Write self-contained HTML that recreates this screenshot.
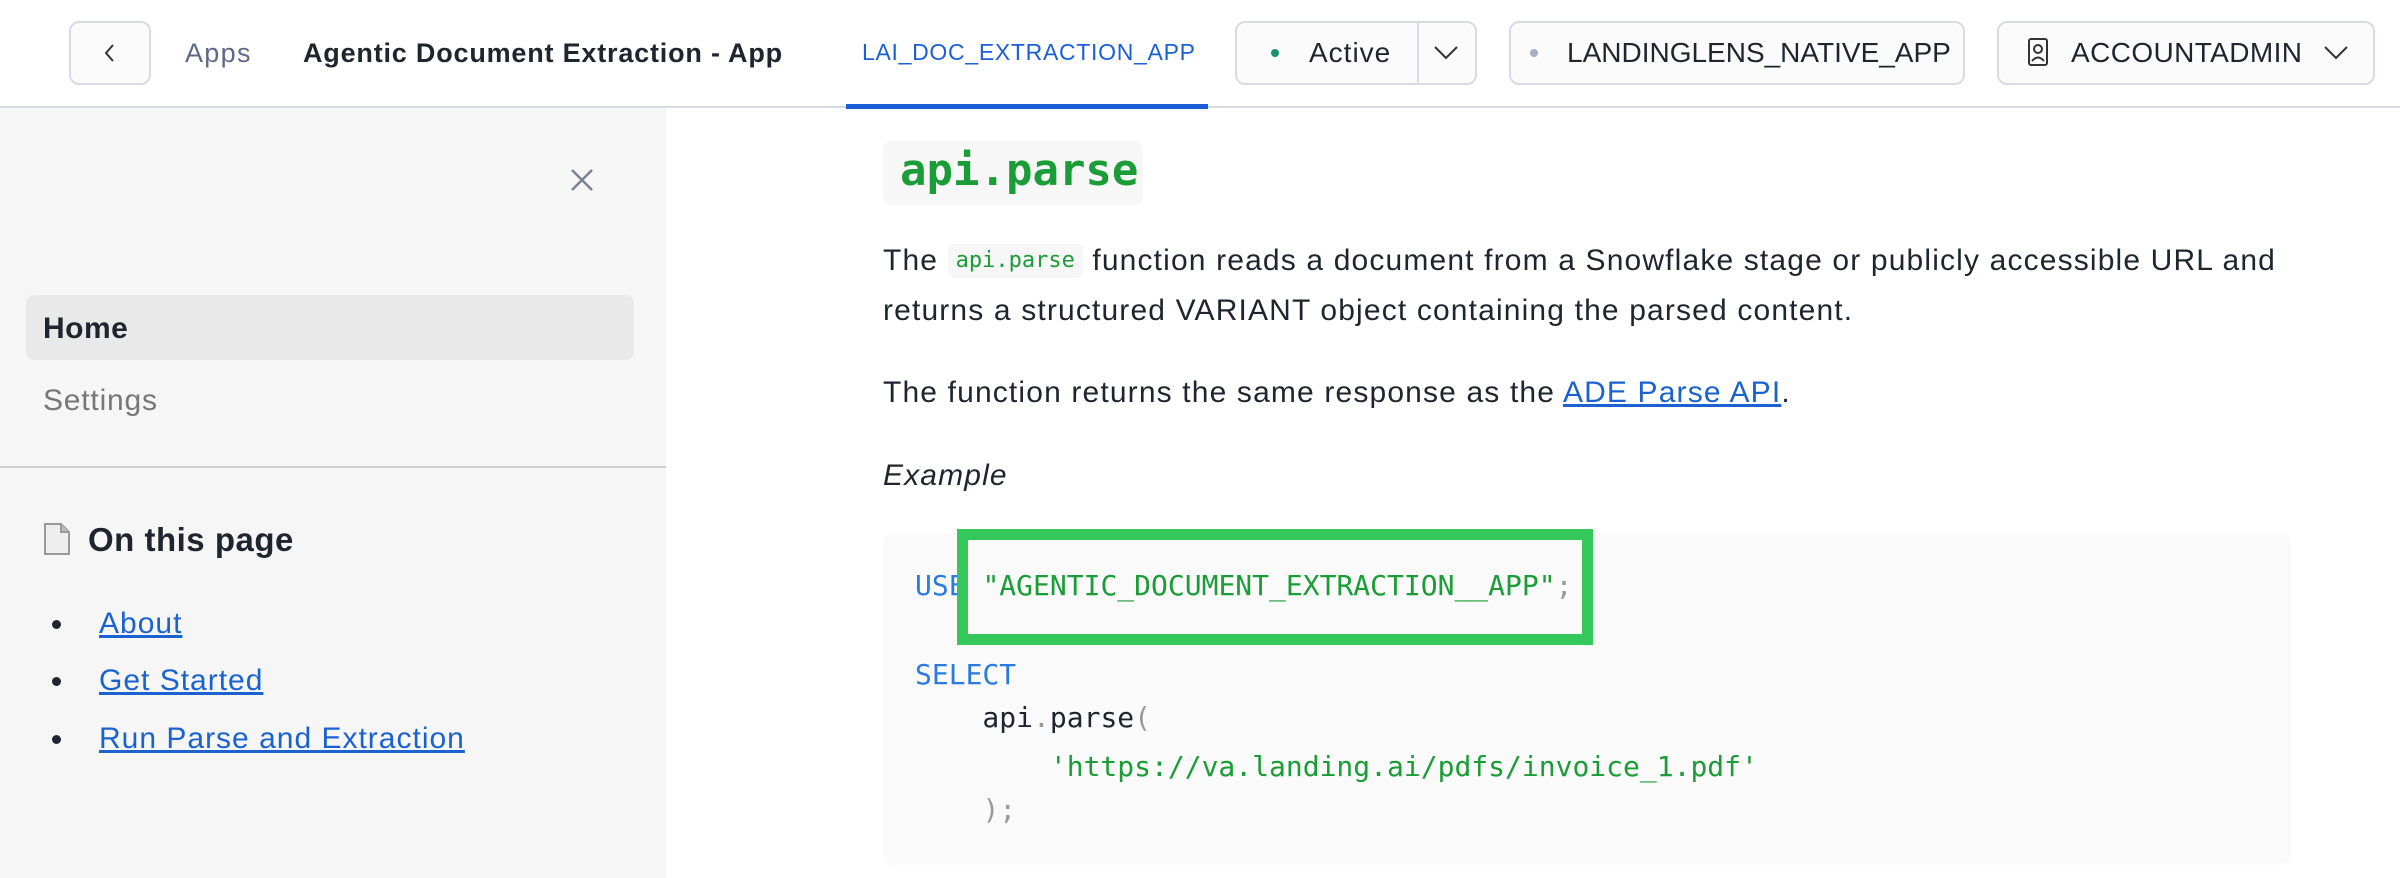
<!DOCTYPE html>
<html><head><meta charset="utf-8"><style>
*{margin:0;padding:0;box-sizing:border-box}
body{width:2400px;height:878px;overflow:hidden;background:#fff;font-family:"Liberation Sans",sans-serif;position:relative;color:#1e252f}
.a{position:absolute}
.hdr{left:0;top:0;width:2400px;height:108px;border-bottom:2px solid #d8dbe2;background:#fff}
.btn{border:2px solid #d8dbe2;border-radius:10px;background:#fbfbfc}
.t{white-space:nowrap;line-height:1}
.side{left:0;top:108px;width:666px;height:770px;background:#f6f6f6}
.mono{font-family:"DejaVu Sans Mono","Liberation Mono",monospace;letter-spacing:0}
.p{font-size:30px;line-height:1;white-space:nowrap;color:#1e252f;letter-spacing:1.15px}
a{color:#1a62d0;text-decoration:underline}
.code{font-family:"DejaVu Sans Mono","Liberation Mono",monospace;font-size:28px;white-space:pre;line-height:1}
.kw{color:#2a7ae2}.str{color:#1a9c36}.pn{color:#999}
</style></head><body>
<div class="a hdr"></div>
<div class="a btn" style="left:69px;top:21px;width:82px;height:64px"></div>
<svg class="a" style="left:100px;top:42px" width="20" height="22"><path d="M13 3 L6 11 L13 19" stroke="#333" stroke-width="2" fill="none"/></svg>
<div class="a t" style="left:185px;top:40px;font-size:27px;color:#5d6a85;letter-spacing:1.3px">Apps</div>
<div class="a t" style="left:303px;top:40px;font-size:27px;font-weight:600;color:#1e252f;letter-spacing:0.8px">Agentic Document Extraction - App</div>
<div class="a t" style="left:862px;top:41px;font-size:23px;color:#1a5fd8;letter-spacing:0.7px">LAI_DOC_EXTRACTION_APP</div>
<div class="a" style="left:846px;top:104px;width:362px;height:5px;background:#1a5fd8"></div>
<div class="a btn" style="left:1235px;top:21px;width:242px;height:64px"></div>
<div class="a" style="left:1417px;top:23px;width:2px;height:60px;background:#d8dbe2"></div>
<div class="a" style="left:1271px;top:49px;width:8px;height:8px;border-radius:50%;background:#16936a"></div>
<div class="a t" style="left:1309px;top:39px;font-size:28px;letter-spacing:1px">Active</div>
<svg class="a" style="left:1432px;top:42px" width="28" height="20"><path d="M3 5 L14 16 L25 5" stroke="#333" stroke-width="2" fill="none"/></svg>
<div class="a btn" style="left:1509px;top:21px;width:456px;height:64px"></div>
<div class="a" style="left:1530px;top:49px;width:8px;height:8px;border-radius:50%;background:#a7b0c2"></div>
<div class="a t" style="left:1567px;top:39px;font-size:28px">LANDINGLENS_NATIVE_APP</div>
<div class="a btn" style="left:1997px;top:21px;width:378px;height:64px"></div>
<svg class="a" style="left:2027px;top:37px" width="22" height="30"><rect x="2" y="2" width="18" height="26" rx="2" stroke="#333" stroke-width="2" fill="none"/><circle cx="11" cy="12" r="4" stroke="#333" stroke-width="2" fill="none"/><path d="M5 24 Q11 17 17 24" stroke="#333" stroke-width="2" fill="none"/></svg>
<div class="a t" style="left:2071px;top:39px;font-size:28px;letter-spacing:0.4px">ACCOUNTADMIN</div>
<svg class="a" style="left:2322px;top:42px" width="28" height="20"><path d="M3 5 L14 16 L25 5" stroke="#333" stroke-width="2" fill="none"/></svg>

<div class="a side"></div>
<svg class="a" style="left:570px;top:168px" width="24" height="24"><path d="M2 2 L22 22 M22 2 L2 22" stroke="#7b8192" stroke-width="2.5"/></svg>
<div class="a" style="left:26px;top:295px;width:608px;height:65px;background:#e9e9e9;border-radius:8px"></div>
<div class="a t" style="left:43px;top:314px;font-size:30px;font-weight:700;color:#1e252f;letter-spacing:0.5px">Home</div>
<div class="a t" style="left:43px;top:386px;font-size:30px;color:#777;letter-spacing:0.8px">Settings</div>
<div class="a" style="left:0;top:466px;width:666px;height:2px;background:#cfcfcf"></div>
<svg class="a" style="left:43px;top:522px" width="28" height="34"><path d="M2 2 H18 L26 10 V32 H2 Z" fill="#eee" stroke="#999" stroke-width="2"/><path d="M18 2 V10 H26" fill="#bbb" stroke="#999" stroke-width="2"/></svg>
<div class="a t" style="left:88px;top:523px;font-size:33px;font-weight:700;color:#1e252f;letter-spacing:0.5px">On this page</div>
<div class="a" style="left:52px;top:620px;width:9px;height:9px;border-radius:50%;background:#1e252f"></div>
<div class="a" style="left:52px;top:677px;width:9px;height:9px;border-radius:50%;background:#1e252f"></div>
<div class="a" style="left:52px;top:735px;width:9px;height:9px;border-radius:50%;background:#1e252f"></div>
<div class="a t" style="left:99px;top:609px;font-size:30px;letter-spacing:1px"><a>About</a></div>
<div class="a t" style="left:99px;top:666px;font-size:30px;letter-spacing:1px"><a>Get Started</a></div>
<div class="a t" style="left:99px;top:724px;font-size:30px;letter-spacing:1px"><a>Run Parse and Extraction</a></div>

<div class="a" style="left:883px;top:141px;width:260px;height:64px;background:#f7f7f7;border-radius:8px"></div>
<div class="a t mono" style="left:900px;top:149px;font-size:44px;font-weight:700;color:#1a9c36">api.parse</div>
<div class="a p" style="left:883px;top:244px">The <span class="mono" style="display:inline-block;font-size:22px;color:#1a9c36;background:#f7f7f7;padding:6px 8px;border-radius:6px;vertical-align:3px">api.parse</span> function reads a document from a Snowflake stage or publicly accessible URL and</div>
<div class="a p" style="left:883px;top:296px">returns a structured VARIANT object containing the parsed content.</div>
<div class="a p" style="left:883px;top:378px">The function returns the same response as the <a>ADE Parse API</a>.</div>
<div class="a p" style="left:883px;top:461px;font-style:italic">Example</div>

<div class="a" style="left:883px;top:533px;width:1408px;height:332px;background:#fafafa;border-radius:12px"></div>
<div class="a code" style="left:915px;top:572px"><span class="kw">USE</span> <span class="str">"AGENTIC_DOCUMENT_EXTRACTION__APP"</span><span class="pn">;</span></div>
<div class="a code" style="left:915px;top:661px"><span class="kw">SELECT</span></div>
<div class="a code" style="left:915px;top:704px;color:#1e252f">    api<span class="pn">.</span>parse<span class="pn">(</span></div>
<div class="a code" style="left:915px;top:753px">        <span class="str">'https://va.landing.ai/pdfs/invoice_1.pdf'</span></div>
<div class="a code" style="left:915px;top:796px">    <span class="pn">);</span></div>
<div class="a" style="left:957px;top:529px;width:636px;height:116px;border:11px solid #34c759"></div>
</body></html>
